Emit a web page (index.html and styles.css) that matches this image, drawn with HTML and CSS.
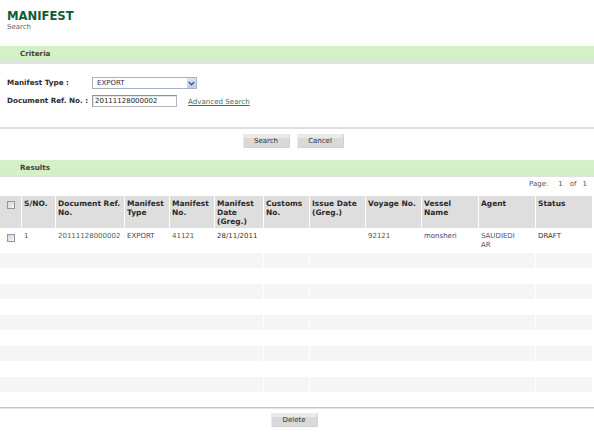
FILE: index.html
```html
<!DOCTYPE html>
<html>
<head>
<meta charset="utf-8">
<title>Manifest Search</title>
<link rel="stylesheet" href="styles.css">
</head>
<body>
<div class="page">
  <header class="head">
    <h1 class="title">MANIFEST</h1>
    <div class="subtitle">Search</div>
  </header>

  <div class="bar">Criteria</div>

  <div class="form">
    <label class="lbl">Manifest Type :</label>
    <div class="select">
      <span class="select-val">EXPORT</span>
      <span class="select-btn"><svg width="7" height="5" viewBox="0 0 7 5"><path d="M0.8 1 L3.5 3.8 L6.2 1" fill="none" stroke="#3d5586" stroke-width="1.4"/></svg></span>
    </div>
    <label class="lbl">Document Ref. No. :</label>
    <div class="ref-row">
      <input class="field" type="text" value="20111128000002">
      <a class="link" href="#">Advanced Search</a>
    </div>
  </div>

  <div class="rule"></div>
  <div class="actions">
    <button class="btn">Search</button>
    <button class="btn">Cancel</button>
  </div>

  <div class="bar bar-results">Results</div>
  <div class="pager"><span>Page:</span><span class="pg-n">1</span><span class="pg-of">of</span><span class="pg-t">1</span></div>

  <table class="grid">
    <colgroup>
      <col class="c-chk"><col class="c-sno"><col class="c-ref"><col class="c-type"><col class="c-mno"><col class="c-date"><col class="c-cus"><col class="c-iss"><col class="c-voy"><col class="c-ves"><col class="c-agt"><col class="c-sts">
    </colgroup>
    <thead>
      <tr>
        <th class="chk-cell"><span class="chk"></span></th>
        <th>S/NO.</th>
        <th>Document Ref. No.</th>
        <th>Manifest Type</th>
        <th>Manifest No.</th>
        <th>Manifest Date (Greg.)</th>
        <th>Customs No.</th>
        <th>Issue Date (Greg.)</th>
        <th>Voyage No.</th>
        <th>Vessel Name</th>
        <th>Agent</th>
        <th>Status</th>
      </tr>
    </thead>
    <tbody>
      <tr class="data">
        <td class="chk-cell"><span class="chk"></span></td>
        <td class="t-grey">1</td>
        <td class="t-green">20111128000002</td>
        <td class="t-purple">EXPORT</td>
        <td class="t-olive">41121</td>
        <td>28/11/2011</td>
        <td></td>
        <td></td>
        <td class="t-olive">92121</td>
        <td class="t-purple">monsheri</td>
        <td class="t-grey"><span class="agent">SAUDIEDIAR</span></td>
        <td>DRAFT</td>
      </tr>
      <tr class="empty alt"><td colspan="6"></td><td></td><td colspan="4"></td><td></td></tr>
      <tr class="empty"><td colspan="6"></td><td></td><td colspan="4"></td><td></td></tr>
      <tr class="empty alt"><td colspan="6"></td><td></td><td colspan="4"></td><td></td></tr>
      <tr class="empty"><td colspan="6"></td><td></td><td colspan="4"></td><td></td></tr>
      <tr class="empty alt"><td colspan="6"></td><td></td><td colspan="4"></td><td></td></tr>
      <tr class="empty"><td colspan="6"></td><td></td><td colspan="4"></td><td></td></tr>
      <tr class="empty alt"><td colspan="6"></td><td></td><td colspan="4"></td><td></td></tr>
      <tr class="empty"><td colspan="6"></td><td></td><td colspan="4"></td><td></td></tr>
      <tr class="empty alt"><td colspan="6"></td><td></td><td colspan="4"></td><td></td></tr>
      <tr class="empty last"><td colspan="6"></td><td></td><td colspan="4"></td><td></td></tr>
    </tbody>
  </table>

  <div class="rule-bottom"></div>
  <div class="actions actions-bottom">
    <button class="btn">Delete</button>
  </div>
</div>
</body>
</html>
```

FILE: styles.css
```css
html, body {
  margin: 0;
  padding: 0;
  background: #ffffff;
}

body {
  font-family: "DejaVu Sans", Verdana, sans-serif;
  font-size: 7px;
  color: #333333;
}

.page {
  width: 594px;
}

.head {
  padding: 10px 7px 0;
}

.title {
  margin: 0;
  font-size: 11.6px;
  line-height: 13px;
  font-weight: bold;
  color: #0e5b38;
}

.subtitle {
  font-size: 7px;
  line-height: 9px;
  color: #666666;
}

.bar {
  margin-top: 14px;
  height: 16px;
  line-height: 16px;
  padding-left: 20px;
  background: #d4f0c6;
  border-bottom: 2px solid #e1e1e1;
  font-weight: bold;
  font-size: 7.2px;
  color: #4a4236;
}

.bar-results {
  margin-top: 12px;
  height: 15px;
  line-height: 15px;
}

.form {
  display: grid;
  grid-template-columns: 85px auto;
  row-gap: 6px;
  align-items: center;
  padding: 13px 7px 0;
}

.lbl {
  font-weight: bold;
  font-size: 7.2px;
  color: #2e2e2e;
  line-height: 12px;
}

.select {
  display: flex;
  align-items: stretch;
  width: 105px;
  height: 12px;
  box-sizing: border-box;
  border: 1px solid #a7b3c3;
  background: #ffffff;
}

.select-val {
  flex: 1;
  padding-left: 4px;
  line-height: 10px;
  font-size: 7px;
  color: #3d2a48;
}

.select-btn {
  width: 9px;
  display: flex;
  align-items: center;
  justify-content: center;
  background: linear-gradient(#dbe4f6, #bfcdeb);
  border-left: 1px solid #ffffff;
}

.ref-row {
  display: flex;
  align-items: center;
}

.field {
  width: 85px;
  height: 12px;
  box-sizing: border-box;
  margin: 0;
  padding: 0 2px;
  border: 1px solid #b4b4b4;
  border-top-color: #8f8f8f;
  border-left-color: #9d9d9d;
  background: #ffffff;
  box-shadow: inset 1px 1px 0 #e4e4e4;
  font-family: "DejaVu Sans", Verdana, sans-serif;
  font-size: 7px;
  line-height: 10px;
  color: #222222;
  outline: none;
}

.link {
  margin-left: 11px;
  font-size: 7.1px;
  color: #3f725c;
  text-decoration: underline;
}

.rule {
  margin-top: 20px;
  height: 2px;
  background: #dedede;
}

.actions {
  display: flex;
  justify-content: center;
  gap: 7px;
  padding: 5px 8px 0 0;
}

.btn {
  width: 47px;
  height: 14px;
  margin: 0;
  padding: 0;
  box-sizing: border-box;
  border: 1px solid #ebebeb;
  border-bottom-color: #d2d2d2;
  border-right-color: #d2d2d2;
  background: linear-gradient(#e9e9e9 0, #e9e9e9 3px, #d9d9d9 3px, #d9d9d9 100%);
  font-family: "DejaVu Sans", Verdana, sans-serif;
  font-size: 7px;
  line-height: 12px;
  color: #333333;
}

.pager {
  display: flex;
  justify-content: flex-end;
  margin-top: 3px;
  padding-right: 7px;
  line-height: 9px;
  font-size: 7px;
  color: #555555;
}

.pg-n { margin-left: 10px; }
.pg-of { margin-left: 7px; }
.pg-t { margin-left: 6px; }

.grid {
  margin-top: 7px;
  width: 592px;
  table-layout: fixed;
  border-collapse: separate;
  border-spacing: 0;
}

.c-chk { width: 21px; }
.c-sno { width: 34px; }
.c-ref { width: 69px; }
.c-type { width: 45px; }
.c-mno { width: 45px; }
.c-date { width: 49px; }
.c-cus { width: 46px; }
.c-iss { width: 56px; }
.c-voy { width: 56px; }
.c-ves { width: 57px; }
.c-agt { width: 57px; }
.c-sts { width: 57px; }

.grid th,
.grid td {
  padding: 0 2px 0 2px;
  border-left: 1px solid #ffffff;
  vertical-align: top;
  text-align: left;
}

.grid th:first-child,
.grid td:first-child {
  border-left: 0;
}

.grid th {
  height: 32px;
  box-sizing: border-box;
  padding-top: 3px;
  background: #dfdede;
  font-weight: bold;
  font-size: 7.5px;
  line-height: 9px;
  color: #2a2a2a;
}

.grid .chk-cell {
  padding-left: 7px;
}

.grid th.chk-cell {
  padding-top: 5px;
}

.chk {
  display: block;
  width: 8px;
  height: 8px;
  box-sizing: border-box;
  border: 1px solid #8b98a8;
  background: linear-gradient(135deg, #d6d6d6, #f6f6f6);
}

.data td {
  height: 25px;
  box-sizing: border-box;
  padding-top: 4px;
  font-size: 7px;
  line-height: 9px;
}

.data td.chk-cell {
  padding-top: 6px;
}

.agent {
  display: block;
  width: 36px;
  word-break: break-all;
}

.t-grey { color: #555555; }
.t-green { color: #3d6a4b; }
.t-purple { color: #5a3560; }
.t-olive { color: #4a5a4a; }

.empty td {
  height: 16px;
  padding: 0;
}

.empty.alt td {
  height: 15px;
  background: #f5f5f5;
}

.empty.last td {
  height: 15px;
}

.rule-bottom {
  height: 1px;
  border-top: 1px solid #c5c5bd;
  background: #e6e6e0;
}

.actions-bottom {
  padding-top: 4px;
  padding-right: 6px;
}
```
